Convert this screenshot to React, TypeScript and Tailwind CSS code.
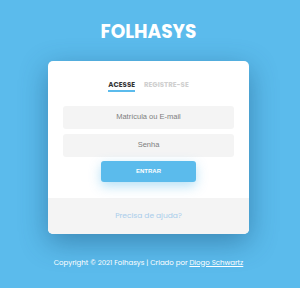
import React from 'react';

const App = () => {
  return (
    <div className="w-[300px] h-[288px] pr-[3px] bg-[#5bbbec] flex flex-col items-center font-['Poppins','Open_Sans',sans-serif]">
      <h1 className="mt-[20px] text-[18.5px] leading-[23px] font-bold text-white">
        FOLHASYS
      </h1>

      <div className="mt-[18px] w-[201px] rounded-[5px] bg-white overflow-hidden shadow-[0_8px_28px_rgba(20,70,110,0.45)]">
        <div className="pt-[19px] flex justify-center gap-[9px] text-[7px] leading-[9px] font-bold">
          <div className="flex flex-col items-center">
            <span className="text-[#333]">ACESSE</span>
            <span className="mt-[1px] h-[1.5px] w-full bg-[#5bbbec]" />
          </div>
          <span className="text-[#cfcfcf]">REGISTRE-SE</span>
        </div>

        <div className="px-[15px] pt-[14px] pb-[16px] flex flex-col items-center font-['Liberation_Sans',Arial,sans-serif]">
          <div className="w-full h-[23px] rounded-[3px] bg-[#f4f4f4] flex items-center justify-center text-[7.5px] text-[#7e7e7e]">
            Matrícula ou E-mail
          </div>
          <div className="mt-[5px] w-full h-[23px] rounded-[3px] bg-[#f4f4f4] flex items-center justify-center text-[7.5px] text-[#7e7e7e]">
            Senha
          </div>
          <button className="mt-[4px] w-[95px] h-[21px] rounded-[3px] bg-[#5bbbec] text-white text-[6px] font-bold shadow-[0_4px_12px_rgba(91,187,236,0.45)]">
            ENTRAR
          </button>
        </div>

        <div className="h-[36px] bg-[#f4f4f4] flex items-center justify-center text-[7.5px] text-[#a9cdeb]">
          Precisa de ajuda?
        </div>
      </div>

      <p className="mt-[24px] text-[7px] leading-[9px] text-white">
        Copyright © 2021 Folhasys | Criado por <span className="underline">Diogo Schwartz</span>
      </p>
    </div>
  );
};

export default App;
